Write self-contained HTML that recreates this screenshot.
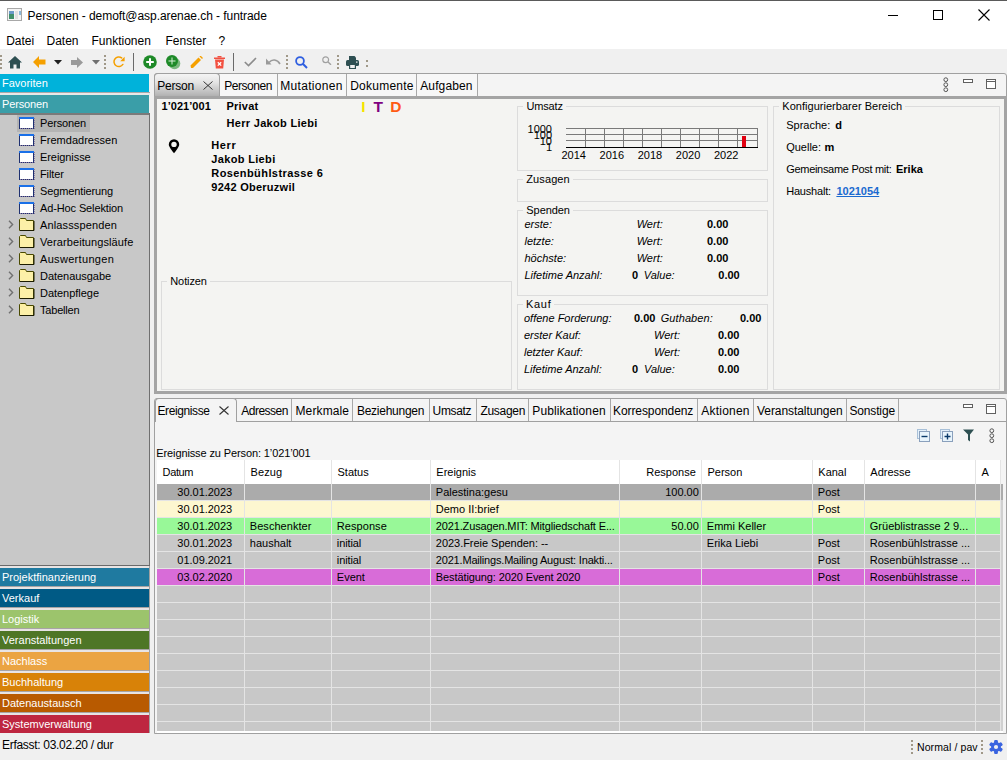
<!DOCTYPE html><html><head><meta charset="utf-8"><style>
html,body{margin:0;padding:0;}
body{width:1007px;height:760px;position:relative;overflow:hidden;background:#f0f0f0;font-family:"Liberation Sans",sans-serif;color:#000;}
.t{position:absolute;white-space:pre;line-height:1;}
.r{position:absolute;box-sizing:border-box;}
</style></head><body>
<div class="r" style="left:0px;top:0px;width:1007px;height:30px;background:#fff;"></div>
<div class="r" style="left:0px;top:0px;width:1007px;height:1px;background:#5a5a5a;"></div>
<svg class="r" style="left:7px;top:8px" width="16" height="14" viewBox="0 0 16 14"><rect x="0.5" y="0.5" width="14" height="12" fill="#f4f4f4" stroke="#a8a8a8"/><rect x="2" y="3" width="5" height="8" fill="#3f8f6a"/><rect x="2" y="3" width="5" height="3" fill="#6a9ac8"/><rect x="8" y="3" width="3" height="8" fill="#e0e0e0"/><rect x="12" y="3" width="2" height="4" fill="#8ab8d8"/></svg>
<div class="t " style="left:27.6px;top:10.34px;font-size:12px;color:#000;letter-spacing:-0.057px;">Personen - demoft@asp.arenae.ch - funtrade</div>
<div class="r" style="left:888px;top:15px;width:10px;height:1px;background:#000;"></div>
<div class="r" style="left:933px;top:10px;width:10px;height:10px;border:1px solid #000;"></div>
<svg class="r" style="left:978px;top:9px" width="12" height="12" viewBox="0 0 12 12"><path d="M0.5 0.5L11.5 11.5M11.5 0.5L0.5 11.5" stroke="#000" stroke-width="1.1"/></svg>
<div class="r" style="left:0px;top:30px;width:1007px;height:19px;background:#fff;"></div>
<div class="t " style="left:6.2px;top:35.04px;font-size:12px;">Datei</div>
<div class="t " style="left:46.5px;top:35.04px;font-size:12px;">Daten</div>
<div class="t " style="left:91.5px;top:35.04px;font-size:12px;">Funktionen</div>
<div class="t " style="left:165.5px;top:35.04px;font-size:12px;">Fenster</div>
<div class="t " style="left:218.5px;top:35.04px;font-size:12px;">?</div>
<div class="r" style="left:0px;top:55px;width:2px;height:2px;background:#a09888;"></div>
<div class="r" style="left:0px;top:59px;width:2px;height:2px;background:#a09888;"></div>
<div class="r" style="left:0px;top:63px;width:2px;height:2px;background:#a09888;"></div>
<div class="r" style="left:0px;top:67px;width:2px;height:2px;background:#a09888;"></div>
<svg class="r" style="left:8px;top:56px" width="14" height="13" viewBox="0 0 14 13"><path d="M7 0L0 6.5H2V12.5H5.5V8.5H8.5V12.5H12V6.5H14Z" fill="#2e4f52"/></svg>
<svg class="r" style="left:33px;top:56px" width="13" height="12" viewBox="0 0 13 12"><path d="M0 6L6 0V3.5H12.5V8.5H6V12Z" fill="#f5a000"/></svg>
<svg class="r" style="left:54px;top:60px" width="8" height="5" viewBox="0 0 8 5"><path d="M0 0H8L4 4.5Z" fill="#202020"/></svg>
<svg class="r" style="left:71px;top:57px" width="12" height="11" viewBox="0 0 12 11"><path d="M12 5.5L6 0V3H0V8H6V11Z" fill="#9a9a9a"/></svg>
<svg class="r" style="left:92px;top:60px" width="8" height="5" viewBox="0 0 8 5"><path d="M0 0H8L4 4.5Z" fill="#707070"/></svg>
<div class="r" style="left:104px;top:55px;width:2px;height:2px;background:#a09888;"></div>
<div class="r" style="left:104px;top:59px;width:2px;height:2px;background:#a09888;"></div>
<div class="r" style="left:104px;top:63px;width:2px;height:2px;background:#a09888;"></div>
<div class="r" style="left:104px;top:67px;width:2px;height:2px;background:#a09888;"></div>
<svg class="r" style="left:113px;top:56px" width="13" height="12" viewBox="0 0 13 12"><path d="M8.65 1.9A4.8 4.8 0 1 0 9.83 8.45" fill="none" stroke="#f5a000" stroke-width="1.5" stroke-linecap="round"/><path d="M11.6 0.8V5.2H7.2Z" fill="#f5a000"/></svg>
<div class="r" style="left:133px;top:53px;width:1px;height:18px;background:#6a6a6a;"></div>
<svg class="r" style="left:143px;top:55px" width="14" height="14" viewBox="0 0 14 14"><circle cx="7" cy="7" r="6.8" fill="#1e8a28"/><path d="M7 3.2V10.8M3.2 7H10.8" stroke="#fff" stroke-width="2"/></svg>
<svg class="r" style="left:166px;top:55px" width="15" height="15" viewBox="0 0 15 15"><circle cx="8.5" cy="8.5" r="5.8" fill="#7ab87e"/><circle cx="6" cy="6" r="6" fill="#1e8a28"/><path d="M6 2.5V9.5M2.5 6H9.5" stroke="#d8f0d8" stroke-width="1"/></svg>
<svg class="r" style="left:190px;top:56px" width="13" height="13" viewBox="0 0 13 13"><path d="M1 12L0.5 9.5L8.5 1.5L11 4L3 12Z" fill="#f5a000"/><path d="M9.5 0.5L10.5 -0.5L13 2L12 3Z" fill="#f5a000"/></svg>
<svg class="r" style="left:214px;top:56px" width="11" height="13" viewBox="0 0 11 13"><path d="M0 1.5H11V3H0Z" fill="#f25040"/><path d="M3.5 0H7.5V1.5H3.5Z" fill="#f25040"/><path d="M1 3.5H10L9.2 12.5H1.8Z" fill="#f25040"/><path d="M3.8 6.2L7.2 9.6M7.2 6.2L3.8 9.6" stroke="#fff" stroke-width="1.3"/></svg>
<div class="r" style="left:233px;top:53px;width:1px;height:18px;background:#6a6a6a;"></div>
<svg class="r" style="left:244px;top:57px" width="13" height="10" viewBox="0 0 13 10"><path d="M0.8 5L4.5 8.6L12 1" fill="none" stroke="#8c8c8c" stroke-width="1.6"/></svg>
<svg class="r" style="left:266px;top:58px" width="15" height="8" viewBox="0 0 15 8"><path d="M3 4.5C6 1 11 1 14 6" fill="none" stroke="#9a9a9a" stroke-width="1.6"/><path d="M0 0.5V6.5H5.5Z" fill="#9a9a9a"/></svg>
<div class="r" style="left:286px;top:55px;width:2px;height:2px;background:#a09888;"></div>
<div class="r" style="left:286px;top:59px;width:2px;height:2px;background:#a09888;"></div>
<div class="r" style="left:286px;top:63px;width:2px;height:2px;background:#a09888;"></div>
<div class="r" style="left:286px;top:67px;width:2px;height:2px;background:#a09888;"></div>
<svg class="r" style="left:295px;top:56px" width="13" height="13" viewBox="0 0 13 13"><circle cx="5" cy="5" r="3.9" fill="none" stroke="#2f5fe0" stroke-width="1.8"/><path d="M7.8 7.8L12 12" stroke="#2f5fe0" stroke-width="2"/></svg>
<svg class="r" style="left:322px;top:56px" width="10" height="9" viewBox="0 0 10 9"><circle cx="3.7" cy="3.7" r="2.9" fill="none" stroke="#a0a0a0" stroke-width="1.2"/><path d="M5.8 5.8L9 8.8" stroke="#a0a0a0" stroke-width="1.4"/></svg>
<div class="r" style="left:337px;top:55px;width:2px;height:2px;background:#a09888;"></div>
<div class="r" style="left:337px;top:59px;width:2px;height:2px;background:#a09888;"></div>
<div class="r" style="left:337px;top:63px;width:2px;height:2px;background:#a09888;"></div>
<div class="r" style="left:337px;top:67px;width:2px;height:2px;background:#a09888;"></div>
<svg class="r" style="left:346px;top:56px" width="13" height="13" viewBox="0 0 13 13"><path d="M3 0H8.5L10 1.5V4H3Z" fill="#2e4f52"/><rect x="0" y="4" width="13" height="6" rx="1.5" fill="#2e4f52"/><rect x="3" y="8" width="7" height="5" fill="#2e4f52"/><rect x="4.2" y="9" width="4.6" height="3" fill="#f0f0f0"/><rect x="10" y="5.5" width="1.5" height="1.2" fill="#f0f0f0"/></svg>
<div class="r" style="left:366px;top:60px;width:2px;height:2px;background:#a09888;"></div>
<div class="r" style="left:366px;top:65px;width:2px;height:2px;background:#a09888;"></div>
<div class="r" style="left:0px;top:74px;width:149px;height:18px;background:#00b2da;"></div>
<div class="r" style="left:0px;top:92px;width:150px;height:1px;background:#a8a8a8;"></div>
<div class="r" style="left:0px;top:93px;width:150px;height:2px;background:#e8e8e8;"></div>
<div class="t " style="left:2px;top:77.99px;font-size:11px;color:#fff;">Favoriten</div>
<div class="r" style="left:0px;top:95px;width:149px;height:18px;background:#3a9ea8;"></div>
<div class="t " style="left:2px;top:99.09px;font-size:11px;color:#fff;letter-spacing:-0.142px;">Personen</div>
<div class="r" style="left:0px;top:113px;width:150px;height:2px;background:#7a7a7a;"></div>
<div class="r" style="left:0px;top:115px;width:149px;height:450px;background:#c8c8c8;"></div>
<div class="r" style="left:149px;top:113px;width:1px;height:453px;background:#707070;"></div>
<div class="r" style="left:0px;top:565px;width:150px;height:1px;background:#6a6a6a;"></div>
<div class="r" style="left:17px;top:115px;width:73px;height:17px;background:#b4b4b4;"></div>
<svg class="r" style="left:19px;top:117px" width="16" height="12" viewBox="0 0 16 12"><rect x="0.5" y="0.5" width="14" height="11" fill="#fff" stroke="#1e3070"/><path d="M15.5 1V12M1 11.5H15" stroke="#8a7aa0" stroke-width="1" stroke-dasharray="1 1"/><rect x="0" y="0" width="15" height="2" fill="#1a70e8"/></svg>
<div class="t " style="left:40px;top:117.69px;font-size:11px;color:#000;letter-spacing:-0.142px;">Personen</div>
<svg class="r" style="left:19px;top:134px" width="16" height="12" viewBox="0 0 16 12"><rect x="0.5" y="0.5" width="14" height="11" fill="#fff" stroke="#1e3070"/><path d="M15.5 1V12M1 11.5H15" stroke="#8a7aa0" stroke-width="1" stroke-dasharray="1 1"/><rect x="0" y="0" width="15" height="2" fill="#1a70e8"/></svg>
<div class="t " style="left:40px;top:134.69px;font-size:11px;color:#000;letter-spacing:0.021px;">Fremdadressen</div>
<svg class="r" style="left:19px;top:151px" width="16" height="12" viewBox="0 0 16 12"><rect x="0.5" y="0.5" width="14" height="11" fill="#fff" stroke="#1e3070"/><path d="M15.5 1V12M1 11.5H15" stroke="#8a7aa0" stroke-width="1" stroke-dasharray="1 1"/><rect x="0" y="0" width="15" height="2" fill="#1a70e8"/></svg>
<div class="t " style="left:40px;top:151.69px;font-size:11px;color:#000;letter-spacing:-0.073px;">Ereignisse</div>
<svg class="r" style="left:19px;top:168px" width="16" height="12" viewBox="0 0 16 12"><rect x="0.5" y="0.5" width="14" height="11" fill="#fff" stroke="#1e3070"/><path d="M15.5 1V12M1 11.5H15" stroke="#8a7aa0" stroke-width="1" stroke-dasharray="1 1"/><rect x="0" y="0" width="15" height="2" fill="#1a70e8"/></svg>
<div class="t " style="left:40px;top:168.69px;font-size:11px;color:#000;letter-spacing:-0.111px;">Filter</div>
<svg class="r" style="left:19px;top:185px" width="16" height="12" viewBox="0 0 16 12"><rect x="0.5" y="0.5" width="14" height="11" fill="#fff" stroke="#1e3070"/><path d="M15.5 1V12M1 11.5H15" stroke="#8a7aa0" stroke-width="1" stroke-dasharray="1 1"/><rect x="0" y="0" width="15" height="2" fill="#1a70e8"/></svg>
<div class="t " style="left:40px;top:185.69px;font-size:11px;color:#000;letter-spacing:-0.126px;">Segmentierung</div>
<svg class="r" style="left:19px;top:202px" width="16" height="12" viewBox="0 0 16 12"><rect x="0.5" y="0.5" width="14" height="11" fill="#fff" stroke="#1e3070"/><path d="M15.5 1V12M1 11.5H15" stroke="#8a7aa0" stroke-width="1" stroke-dasharray="1 1"/><rect x="0" y="0" width="15" height="2" fill="#1a70e8"/></svg>
<div class="t " style="left:40px;top:202.69px;font-size:11px;color:#000;letter-spacing:-0.120px;">Ad-Hoc Selektion</div>
<svg class="r" style="left:8px;top:220px" width="6" height="9" viewBox="0 0 6 9"><path d="M1 0.8L4.6 4.5L1 8.2" fill="none" stroke="#707070" stroke-width="1.4"/></svg>
<svg class="r" style="left:19px;top:218px" width="16" height="13" viewBox="0 0 16 13"><path d="M0.5 12.5V1.5L1.5 0.5H6.5L7.5 2.5H14.5V12.5Z" fill="#fdf0a0" stroke="#4a4a00"/><path d="M1 12.5H15V3" fill="none" stroke="#1c1c00" stroke-width="1"/><rect x="1" y="3" width="13" height="9" fill="#fcf0a8"/></svg>
<div class="t " style="left:40px;top:219.69px;font-size:11px;color:#000;letter-spacing:0.139px;">Anlassspenden</div>
<svg class="r" style="left:8px;top:237px" width="6" height="9" viewBox="0 0 6 9"><path d="M1 0.8L4.6 4.5L1 8.2" fill="none" stroke="#707070" stroke-width="1.4"/></svg>
<svg class="r" style="left:19px;top:235px" width="16" height="13" viewBox="0 0 16 13"><path d="M0.5 12.5V1.5L1.5 0.5H6.5L7.5 2.5H14.5V12.5Z" fill="#fdf0a0" stroke="#4a4a00"/><path d="M1 12.5H15V3" fill="none" stroke="#1c1c00" stroke-width="1"/><rect x="1" y="3" width="13" height="9" fill="#fcf0a8"/></svg>
<div class="t " style="left:40px;top:236.69px;font-size:11px;color:#000;letter-spacing:0.092px;">Verarbeitungsläufe</div>
<svg class="r" style="left:8px;top:254px" width="6" height="9" viewBox="0 0 6 9"><path d="M1 0.8L4.6 4.5L1 8.2" fill="none" stroke="#707070" stroke-width="1.4"/></svg>
<svg class="r" style="left:19px;top:252px" width="16" height="13" viewBox="0 0 16 13"><path d="M0.5 12.5V1.5L1.5 0.5H6.5L7.5 2.5H14.5V12.5Z" fill="#fdf0a0" stroke="#4a4a00"/><path d="M1 12.5H15V3" fill="none" stroke="#1c1c00" stroke-width="1"/><rect x="1" y="3" width="13" height="9" fill="#fcf0a8"/></svg>
<div class="t " style="left:40px;top:253.69px;font-size:11px;color:#000;letter-spacing:0.316px;">Auswertungen</div>
<svg class="r" style="left:8px;top:271px" width="6" height="9" viewBox="0 0 6 9"><path d="M1 0.8L4.6 4.5L1 8.2" fill="none" stroke="#707070" stroke-width="1.4"/></svg>
<svg class="r" style="left:19px;top:269px" width="16" height="13" viewBox="0 0 16 13"><path d="M0.5 12.5V1.5L1.5 0.5H6.5L7.5 2.5H14.5V12.5Z" fill="#fdf0a0" stroke="#4a4a00"/><path d="M1 12.5H15V3" fill="none" stroke="#1c1c00" stroke-width="1"/><rect x="1" y="3" width="13" height="9" fill="#fcf0a8"/></svg>
<div class="t " style="left:40px;top:270.69px;font-size:11px;color:#000;letter-spacing:-0.042px;">Datenausgabe</div>
<svg class="r" style="left:8px;top:288px" width="6" height="9" viewBox="0 0 6 9"><path d="M1 0.8L4.6 4.5L1 8.2" fill="none" stroke="#707070" stroke-width="1.4"/></svg>
<svg class="r" style="left:19px;top:286px" width="16" height="13" viewBox="0 0 16 13"><path d="M0.5 12.5V1.5L1.5 0.5H6.5L7.5 2.5H14.5V12.5Z" fill="#fdf0a0" stroke="#4a4a00"/><path d="M1 12.5H15V3" fill="none" stroke="#1c1c00" stroke-width="1"/><rect x="1" y="3" width="13" height="9" fill="#fcf0a8"/></svg>
<div class="t " style="left:40px;top:287.69px;font-size:11px;color:#000;letter-spacing:-0.033px;">Datenpflege</div>
<svg class="r" style="left:8px;top:305px" width="6" height="9" viewBox="0 0 6 9"><path d="M1 0.8L4.6 4.5L1 8.2" fill="none" stroke="#707070" stroke-width="1.4"/></svg>
<svg class="r" style="left:19px;top:303px" width="16" height="13" viewBox="0 0 16 13"><path d="M0.5 12.5V1.5L1.5 0.5H6.5L7.5 2.5H14.5V12.5Z" fill="#fdf0a0" stroke="#4a4a00"/><path d="M1 12.5H15V3" fill="none" stroke="#1c1c00" stroke-width="1"/><rect x="1" y="3" width="13" height="9" fill="#fcf0a8"/></svg>
<div class="t " style="left:40px;top:304.69px;font-size:11px;color:#000;letter-spacing:-0.198px;">Tabellen</div>
<div class="r" style="left:0px;top:566px;width:150px;height:169px;background:#e8e4e4;"></div>
<div class="r" style="left:0px;top:568px;width:150px;height:18px;background:#1f7aa0;"></div>
<div class="r" style="left:0px;top:586px;width:150px;height:1px;background:#a8a4a4;"></div>
<div class="t " style="left:2px;top:571.99px;font-size:11px;color:#fff;">Projektfinanzierung</div>
<div class="r" style="left:0px;top:589px;width:150px;height:18px;background:#005a85;"></div>
<div class="r" style="left:0px;top:607px;width:150px;height:1px;background:#a8a4a4;"></div>
<div class="t " style="left:2px;top:592.99px;font-size:11px;color:#fff;">Verkauf</div>
<div class="r" style="left:0px;top:610px;width:150px;height:18px;background:#9cc46c;"></div>
<div class="r" style="left:0px;top:628px;width:150px;height:1px;background:#a8a4a4;"></div>
<div class="t " style="left:2px;top:613.99px;font-size:11px;color:#fff;">Logistik</div>
<div class="r" style="left:0px;top:631px;width:150px;height:18px;background:#4e7626;"></div>
<div class="r" style="left:0px;top:649px;width:150px;height:1px;background:#a8a4a4;"></div>
<div class="t " style="left:2px;top:634.99px;font-size:11px;color:#fff;">Veranstaltungen</div>
<div class="r" style="left:0px;top:652px;width:150px;height:18px;background:#eba442;"></div>
<div class="r" style="left:0px;top:670px;width:150px;height:1px;background:#a8a4a4;"></div>
<div class="t " style="left:2px;top:655.99px;font-size:11px;color:#fff;">Nachlass</div>
<div class="r" style="left:0px;top:673px;width:150px;height:18px;background:#d88208;"></div>
<div class="r" style="left:0px;top:691px;width:150px;height:1px;background:#a8a4a4;"></div>
<div class="t " style="left:2px;top:676.99px;font-size:11px;color:#fff;">Buchhaltung</div>
<div class="r" style="left:0px;top:694px;width:150px;height:18px;background:#b85a00;"></div>
<div class="r" style="left:0px;top:712px;width:150px;height:1px;background:#a8a4a4;"></div>
<div class="t " style="left:2px;top:697.99px;font-size:11px;color:#fff;">Datenaustausch</div>
<div class="r" style="left:0px;top:715px;width:150px;height:18px;background:#be2640;"></div>
<div class="r" style="left:0px;top:733px;width:150px;height:1px;background:#a8a4a4;"></div>
<div class="t " style="left:2px;top:718.99px;font-size:11px;color:#fff;">Systemverwaltung</div>
<div class="r" style="left:149px;top:566px;width:1px;height:167px;background:#a0a0a0;"></div>
<div class="r" style="left:0px;top:733px;width:150px;height:2px;background:#f0f0f0;"></div>
<div class="t " style="left:2px;top:738.74px;font-size:12px;letter-spacing:-0.299px;">Erfasst: 03.02.20 / dur</div>
<div class="r" style="left:911px;top:740px;width:2px;height:2px;background:#a09888;"></div>
<div class="r" style="left:911px;top:744px;width:2px;height:2px;background:#a09888;"></div>
<div class="r" style="left:911px;top:748px;width:2px;height:2px;background:#a09888;"></div>
<div class="r" style="left:911px;top:752px;width:2px;height:2px;background:#a09888;"></div>
<div class="t " style="left:917px;top:741.61px;font-size:10.5px;letter-spacing:0.097px;">Normal / pav</div>
<div class="r" style="left:981px;top:740px;width:2px;height:2px;background:#a09888;"></div>
<div class="r" style="left:981px;top:744px;width:2px;height:2px;background:#a09888;"></div>
<div class="r" style="left:981px;top:748px;width:2px;height:2px;background:#a09888;"></div>
<div class="r" style="left:981px;top:752px;width:2px;height:2px;background:#a09888;"></div>
<svg class="r" style="left:989px;top:740px" width="14" height="14" viewBox="0 0 14 14"><g transform="translate(7 7)" fill="#3a64e0"><circle r="4.9"/><rect x="-1.9" y="-7" width="3.8" height="4" rx="1.2" transform="rotate(0)"/><rect x="-1.9" y="-7" width="3.8" height="4" rx="1.2" transform="rotate(60)"/><rect x="-1.9" y="-7" width="3.8" height="4" rx="1.2" transform="rotate(120)"/><rect x="-1.9" y="-7" width="3.8" height="4" rx="1.2" transform="rotate(180)"/><rect x="-1.9" y="-7" width="3.8" height="4" rx="1.2" transform="rotate(240)"/><rect x="-1.9" y="-7" width="3.8" height="4" rx="1.2" transform="rotate(300)"/></g><circle cx="7" cy="7" r="2.1" fill="#f0f0f0"/></svg>
<div class="r" style="left:154px;top:73px;width:853px;height:321px;background:#f4f4f4;border:1px solid #a0a0a0;border-radius:3px 3px 0 0;"></div>
<div class="r" style="left:219px;top:73px;width:259px;height:24px;background:#f7f7f7;border-top:1px solid #a0a0a0;"></div>
<div class="r" style="left:154px;top:73px;width:66px;height:25px;background:linear-gradient(#f4f4f4 0%,#e4e4e4 35%,#aaaaaa 100%);border:1px solid #a0a0a0;border-bottom:none;border-radius:4px 4px 0 0;"></div>
<div class="t " style="left:157.3px;top:80.34px;font-size:12px;color:#000;letter-spacing:-0.246px;">Person</div>
<div class="r" style="left:277px;top:74px;width:1px;height:22px;background:#a8a8a8;"></div>
<div class="t " style="left:224.2px;top:80.34px;font-size:12px;color:#000;letter-spacing:-0.439px;">Personen</div>
<div class="r" style="left:346px;top:74px;width:1px;height:22px;background:#a8a8a8;"></div>
<div class="t " style="left:280.2px;top:80.34px;font-size:12px;color:#000;letter-spacing:0.325px;">Mutationen</div>
<div class="r" style="left:416px;top:74px;width:1px;height:22px;background:#a8a8a8;"></div>
<div class="t " style="left:350.2px;top:80.34px;font-size:12px;color:#000;letter-spacing:0.241px;">Dokumente</div>
<div class="r" style="left:477px;top:74px;width:1px;height:22px;background:#a8a8a8;"></div>
<div class="t " style="left:420.2px;top:80.34px;font-size:12px;color:#000;letter-spacing:0.130px;">Aufgaben</div>
<svg class="r" style="left:203px;top:81px" width="10" height="9" viewBox="0 0 10 9"><path d="M0.5 0.5L9.5 8.5M9.5 0.5L0.5 8.5" stroke="#222" stroke-width="0.9"/></svg>
<svg class="r" style="left:943px;top:77px" width="6" height="16" viewBox="0 0 6 16"><circle cx="2.8" cy="2.7" r="1.9" fill="none" stroke="#555" stroke-width="1"/><circle cx="2.8" cy="7.7" r="1.9" fill="none" stroke="#555" stroke-width="1"/><circle cx="2.8" cy="12.7" r="1.9" fill="none" stroke="#555" stroke-width="1"/></svg>
<div class="r" style="left:963px;top:79px;width:10px;height:4px;border:1px solid #606060;background:#fff;"></div>
<div class="r" style="left:986px;top:79px;width:10px;height:10px;border:1px solid #606060;background:#fff;"></div>
<div class="r" style="left:987px;top:81px;width:8px;height:1px;background:#606060;"></div>
<div class="r" style="left:154px;top:96px;width:853px;height:298px;border:3px solid #a4a4a4;background:#f4f4f2;"></div>
<div class="t " style="left:161.5px;top:101.19px;font-size:11px;font-weight:bold;letter-spacing:0.045px;">1’021’001</div>
<div class="t " style="left:226.5px;top:101.19px;font-size:11px;font-weight:bold;letter-spacing:0.224px;">Privat</div>
<div class="t " style="left:226.5px;top:117.69px;font-size:11px;font-weight:bold;letter-spacing:0.306px;">Herr Jakob Liebi</div>
<div class="t " style="left:361.2px;top:98.78px;font-size:15.5px;font-weight:bold;color:#f5e400;">I</div>
<div class="t " style="left:373.6px;top:98.78px;font-size:15.5px;font-weight:bold;color:#800080;">T</div>
<div class="t " style="left:390.2px;top:98.78px;font-size:15.5px;font-weight:bold;color:#ff5a14;">D</div>
<svg class="r" style="left:168px;top:139px" width="12" height="15" viewBox="0 0 12 15"><path d="M6 14.3C2.4 9.6 0.8 7.2 0.8 5.4A5.2 5.2 0 0 1 11.2 5.4C11.2 7.2 9.6 9.6 6 14.3Z" fill="#000"/><circle cx="6" cy="5.4" r="2.7" fill="#f4f4f2"/></svg>
<div class="t " style="left:211.3px;top:139.99px;font-size:11px;font-weight:bold;letter-spacing:0.625px;">Herr</div>
<div class="t " style="left:211.3px;top:153.84px;font-size:11px;font-weight:bold;letter-spacing:0.337px;">Jakob Liebi</div>
<div class="t " style="left:211.3px;top:167.69px;font-size:11px;font-weight:bold;letter-spacing:0.415px;">Rosenbühlstrasse 6</div>
<div class="t " style="left:211.3px;top:181.54px;font-size:11px;font-weight:bold;letter-spacing:0.262px;">9242 Oberuzwil</div>
<div class="r" style="left:161px;top:281px;width:351px;height:109px;border:1px solid #dcdcdc;"></div>
<div class="t " style="left:170.3px;top:276.19px;font-size:11px;background:#f4f4f2;padding:0 3px;margin-left:-3px;letter-spacing:-0.116px;">Notizen</div>
<div class="r" style="left:517px;top:106px;width:251px;height:65px;border:1px solid #dcdcdc;"></div>
<div class="t " style="left:526.4px;top:101.19px;font-size:11px;background:#f4f4f2;padding:0 3px;margin-left:-3px;letter-spacing:-0.136px;">Umsatz</div>
<svg class="r" style="left:0;top:0" width="1007" height="760"><g stroke="#7a7a7a" stroke-width="1"><path d="M566 128.5H757.5"/><path d="M566 134.5H757.5"/><path d="M566 140.5H757.5"/><path d="M585.5 128V147"/><path d="M604.5 128V147"/><path d="M623.5 128V147"/><path d="M642.5 128V147"/><path d="M661.5 128V147"/><path d="M680.5 128V147"/><path d="M699.5 128V147"/><path d="M718.5 128V147"/><path d="M737.5 128V147"/><path d="M757.5 128V147"/></g><path d="M566 147.5H758" stroke="#000" stroke-width="1"/><rect x="742" y="136" width="4" height="11" fill="#e00010"/></svg>
<div class="t" style="right:455px;top:124.19px;font-size:11px;">1000</div>
<div class="t" style="right:455px;top:130.19px;font-size:11px;">100</div>
<div class="t" style="right:455px;top:136.19px;font-size:11px;">10</div>
<div class="t" style="right:455px;top:142.19px;font-size:11px;">1</div>
<div class="t " style="left:561.5px;top:149.69px;font-size:11px;">2014</div>
<div class="t " style="left:599.6px;top:149.69px;font-size:11px;">2016</div>
<div class="t " style="left:637.7px;top:149.69px;font-size:11px;">2018</div>
<div class="t " style="left:675.8px;top:149.69px;font-size:11px;">2020</div>
<div class="t " style="left:713.9px;top:149.69px;font-size:11px;">2022</div>
<div class="r" style="left:517px;top:179px;width:251px;height:23px;border:1px solid #dcdcdc;"></div>
<div class="t " style="left:526.3px;top:174.19px;font-size:11px;background:#f4f4f2;padding:0 3px;margin-left:-3px;letter-spacing:0.098px;">Zusagen</div>
<div class="r" style="left:517px;top:210px;width:251px;height:86px;border:1px solid #dcdcdc;"></div>
<div class="t " style="left:526.3px;top:205.19px;font-size:11px;background:#f4f4f2;padding:0 3px;margin-left:-3px;letter-spacing:-0.058px;">Spenden</div>
<div class="t " style="left:524.5px;top:218.99px;font-size:11px;font-style:italic;">erste:</div>
<div class="t " style="left:636.7px;top:218.99px;font-size:11px;font-style:italic;">Wert:</div>
<div class="t " style="left:707px;top:218.99px;font-size:11px;font-weight:bold;">0.00</div>
<div class="t " style="left:524.5px;top:235.89px;font-size:11px;font-style:italic;">letzte:</div>
<div class="t " style="left:636.7px;top:235.89px;font-size:11px;font-style:italic;">Wert:</div>
<div class="t " style="left:707px;top:235.89px;font-size:11px;font-weight:bold;">0.00</div>
<div class="t " style="left:524.5px;top:252.79px;font-size:11px;font-style:italic;">höchste:</div>
<div class="t " style="left:636.7px;top:252.79px;font-size:11px;font-style:italic;">Wert:</div>
<div class="t " style="left:707px;top:252.79px;font-size:11px;font-weight:bold;">0.00</div>
<div class="t " style="left:524.5px;top:269.69px;font-size:11px;font-style:italic;">Lifetime Anzahl:</div>
<div class="t " style="left:632px;top:269.69px;font-size:11px;font-weight:bold;">0</div>
<div class="t " style="left:643.8px;top:269.69px;font-size:11px;font-style:italic;">Value:</div>
<div class="t " style="left:718.3px;top:269.69px;font-size:11px;font-weight:bold;">0.00</div>
<div class="r" style="left:517px;top:304px;width:251px;height:86px;border:1px solid #dcdcdc;"></div>
<div class="t " style="left:526px;top:299.19px;font-size:11px;background:#f4f4f2;padding:0 3px;margin-left:-3px;letter-spacing:0.686px;">Kauf</div>
<div class="t " style="left:524px;top:312.89px;font-size:11px;font-style:italic;">offene Forderung:</div>
<div class="t " style="left:634px;top:312.89px;font-size:11px;font-weight:bold;">0.00</div>
<div class="t " style="left:660.7px;top:312.89px;font-size:11px;font-style:italic;letter-spacing:0.091px;">Guthaben:</div>
<div class="t " style="left:740px;top:312.89px;font-size:11px;font-weight:bold;">0.00</div>
<div class="t " style="left:524px;top:329.79px;font-size:11px;font-style:italic;">erster Kauf:</div>
<div class="t " style="left:654px;top:329.79px;font-size:11px;font-style:italic;">Wert:</div>
<div class="t " style="left:718px;top:329.79px;font-size:11px;font-weight:bold;">0.00</div>
<div class="t " style="left:524px;top:346.59px;font-size:11px;font-style:italic;">letzter Kauf:</div>
<div class="t " style="left:654px;top:346.59px;font-size:11px;font-style:italic;">Wert:</div>
<div class="t " style="left:718px;top:346.59px;font-size:11px;font-weight:bold;">0.00</div>
<div class="t " style="left:524px;top:363.79px;font-size:11px;font-style:italic;">Lifetime Anzahl:</div>
<div class="t " style="left:632px;top:363.79px;font-size:11px;font-weight:bold;">0</div>
<div class="t " style="left:644px;top:363.79px;font-size:11px;font-style:italic;">Value:</div>
<div class="t " style="left:718px;top:363.79px;font-size:11px;font-weight:bold;">0.00</div>
<div class="r" style="left:773px;top:106px;width:227px;height:284px;border:1px solid #dcdcdc;"></div>
<div class="t " style="left:782.3px;top:101.19px;font-size:11px;background:#f4f4f2;padding:0 3px;margin-left:-3px;letter-spacing:0.025px;">Konfigurierbarer Bereich</div>
<div class="t " style="left:786.2px;top:119.79px;font-size:11px;">Sprache:</div>
<div class="t " style="left:835.2px;top:119.79px;font-size:11px;font-weight:bold;">d</div>
<div class="t " style="left:786.2px;top:142.19px;font-size:11px;">Quelle:</div>
<div class="t " style="left:824.4px;top:142.19px;font-size:11px;font-weight:bold;">m</div>
<div class="t " style="left:786.2px;top:164.29px;font-size:11px;letter-spacing:-0.298px;">Gemeinsame Post mit:</div>
<div class="t " style="left:896px;top:164.29px;font-size:11px;font-weight:bold;">Erika</div>
<div class="t " style="left:786.2px;top:185.99px;font-size:11px;letter-spacing:-0.198px;">Haushalt:</div>
<div class="t " style="left:836.4px;top:185.99px;font-size:11px;font-weight:bold;color:#1a6ad0;text-decoration:underline;">1021054</div>
<div class="r" style="left:154px;top:398px;width:853px;height:336px;background:#f4f4f4;border:1px solid #a0a0a0;border-radius:3px 3px 0 0;"></div>
<div class="r" style="left:154px;top:421px;width:853px;height:1px;background:#a0a0a0;"></div>
<div class="r" style="left:155px;top:398px;width:82px;height:24px;background:#f4f4f4;border:1px solid #a0a0a0;border-bottom:none;border-radius:4px 4px 0 0;"></div>
<div class="t " style="left:157.5px;top:404.74px;font-size:12px;letter-spacing:-0.403px;">Ereignisse</div>
<div class="r" style="left:291px;top:399px;width:1px;height:22px;background:#a8a8a8;"></div>
<div class="t " style="left:241.2px;top:404.74px;font-size:12px;letter-spacing:-0.486px;">Adressen</div>
<div class="r" style="left:352px;top:399px;width:1px;height:22px;background:#a8a8a8;"></div>
<div class="t " style="left:295.5px;top:404.74px;font-size:12px;letter-spacing:0.116px;">Merkmale</div>
<div class="r" style="left:429px;top:399px;width:1px;height:22px;background:#a8a8a8;"></div>
<div class="t " style="left:356.9px;top:404.74px;font-size:12px;letter-spacing:-0.256px;">Beziehungen</div>
<div class="r" style="left:476px;top:399px;width:1px;height:22px;background:#a8a8a8;"></div>
<div class="t " style="left:432.6px;top:404.74px;font-size:12px;letter-spacing:-0.334px;">Umsatz</div>
<div class="r" style="left:528px;top:399px;width:1px;height:22px;background:#a8a8a8;"></div>
<div class="t " style="left:480.4px;top:404.74px;font-size:12px;letter-spacing:-0.284px;">Zusagen</div>
<div class="r" style="left:610px;top:399px;width:1px;height:22px;background:#a8a8a8;"></div>
<div class="t " style="left:532.3px;top:404.74px;font-size:12px;letter-spacing:0.103px;">Publikationen</div>
<div class="r" style="left:697px;top:399px;width:1px;height:22px;background:#a8a8a8;"></div>
<div class="t " style="left:613px;top:404.74px;font-size:12px;letter-spacing:-0.091px;">Korrespondenz</div>
<div class="r" style="left:753px;top:399px;width:1px;height:22px;background:#a8a8a8;"></div>
<div class="t " style="left:701.3px;top:404.74px;font-size:12px;letter-spacing:0.214px;">Aktionen</div>
<div class="r" style="left:846px;top:399px;width:1px;height:22px;background:#a8a8a8;"></div>
<div class="t " style="left:757.1px;top:404.74px;font-size:12px;letter-spacing:-0.082px;">Veranstaltungen</div>
<div class="r" style="left:898px;top:399px;width:1px;height:22px;background:#a8a8a8;"></div>
<div class="t " style="left:849.4px;top:404.74px;font-size:12px;letter-spacing:-0.143px;">Sonstige</div>
<svg class="r" style="left:219px;top:406px" width="10" height="9" viewBox="0 0 10 9"><path d="M0.5 0.5L9.5 8.5M9.5 0.5L0.5 8.5" stroke="#333" stroke-width="1.1"/></svg>
<div class="r" style="left:963px;top:404px;width:10px;height:4px;border:1px solid #606060;background:#fff;"></div>
<div class="r" style="left:986px;top:404px;width:10px;height:10px;border:1px solid #606060;background:#fff;"></div>
<div class="r" style="left:987px;top:406px;width:8px;height:1px;background:#606060;"></div>
<svg class="r" style="left:917px;top:429px" width="13" height="13" viewBox="0 0 13 13"><rect x="0.5" y="0.5" width="9" height="9" fill="#e4f0fa" stroke="#a8c0d8"/><rect x="2.5" y="2.5" width="10" height="10" fill="#e8f4fc" stroke="#8aa0bc"/><path d="M4.5 7.5H10.5" stroke="#0a3a6a" stroke-width="1.4"/></svg>
<svg class="r" style="left:940px;top:429px" width="13" height="13" viewBox="0 0 13 13"><rect x="0.5" y="0.5" width="9" height="9" fill="#e4f0fa" stroke="#a8c0d8"/><rect x="2.5" y="2.5" width="10" height="10" fill="#e8f4fc" stroke="#8aa0bc"/><path d="M4.5 7.5H10.5M7.5 4.5V10.5" stroke="#0a3a6a" stroke-width="1.4"/></svg>
<svg class="r" style="left:963px;top:429px" width="12" height="13" viewBox="0 0 12 13"><path d="M0 0.5H11L7 5.5V12.5L5 11V5.5Z" fill="#2e5052"/></svg>
<svg class="r" style="left:989px;top:428px" width="6" height="16" viewBox="0 0 6 16"><circle cx="2.8" cy="2.7" r="1.9" fill="none" stroke="#555" stroke-width="1"/><circle cx="2.8" cy="7.7" r="1.9" fill="none" stroke="#555" stroke-width="1"/><circle cx="2.8" cy="12.7" r="1.9" fill="none" stroke="#555" stroke-width="1"/></svg>
<div class="t " style="left:156.3px;top:448.19px;font-size:11px;letter-spacing:-0.116px;">Ereignisse zu Person: 1’021’001</div>
<div class="r" style="left:157px;top:460px;width:844px;height:271px;background:#c8c8c8;"></div>
<div class="r" style="left:157px;top:460px;width:844px;height:24px;background:#fff;"></div>
<div class="r" style="left:157px;top:484px;width:843px;height:16px;background:#ababab;"></div>
<div class="r" style="left:157px;top:501px;width:843px;height:16px;background:#fdf7d0;"></div>
<div class="r" style="left:157px;top:518px;width:843px;height:16px;background:#98f898;"></div>
<div class="r" style="left:157px;top:535px;width:843px;height:16px;background:#c8c8c8;"></div>
<div class="r" style="left:157px;top:552px;width:843px;height:16px;background:#c8c8c8;"></div>
<div class="r" style="left:157px;top:569px;width:843px;height:16px;background:#d86cd8;"></div>
<div class="r" style="left:157px;top:500px;width:844px;height:1px;background:#e4e4e4;"></div>
<div class="r" style="left:157px;top:517px;width:844px;height:1px;background:#e4e4e4;"></div>
<div class="r" style="left:157px;top:534px;width:844px;height:1px;background:#e4e4e4;"></div>
<div class="r" style="left:157px;top:551px;width:844px;height:1px;background:#e4e4e4;"></div>
<div class="r" style="left:157px;top:568px;width:844px;height:1px;background:#e4e4e4;"></div>
<div class="r" style="left:157px;top:585px;width:844px;height:1px;background:#e4e4e4;"></div>
<div class="r" style="left:157px;top:602px;width:844px;height:1px;background:#e4e4e4;"></div>
<div class="r" style="left:157px;top:619px;width:844px;height:1px;background:#e4e4e4;"></div>
<div class="r" style="left:157px;top:636px;width:844px;height:1px;background:#e4e4e4;"></div>
<div class="r" style="left:157px;top:653px;width:844px;height:1px;background:#e4e4e4;"></div>
<div class="r" style="left:157px;top:670px;width:844px;height:1px;background:#e4e4e4;"></div>
<div class="r" style="left:157px;top:687px;width:844px;height:1px;background:#e4e4e4;"></div>
<div class="r" style="left:157px;top:704px;width:844px;height:1px;background:#e4e4e4;"></div>
<div class="r" style="left:157px;top:721px;width:844px;height:1px;background:#e4e4e4;"></div>
<div class="r" style="left:244px;top:460px;width:1px;height:271px;background:#e4e4e4;"></div>
<div class="r" style="left:331px;top:460px;width:1px;height:271px;background:#e4e4e4;"></div>
<div class="r" style="left:430px;top:460px;width:1px;height:271px;background:#e4e4e4;"></div>
<div class="r" style="left:619px;top:460px;width:1px;height:271px;background:#e4e4e4;"></div>
<div class="r" style="left:701px;top:460px;width:1px;height:271px;background:#e4e4e4;"></div>
<div class="r" style="left:812px;top:460px;width:1px;height:271px;background:#e4e4e4;"></div>
<div class="r" style="left:864px;top:460px;width:1px;height:271px;background:#e4e4e4;"></div>
<div class="r" style="left:975px;top:460px;width:1px;height:271px;background:#e4e4e4;"></div>
<div class="r" style="left:1000px;top:460px;width:1px;height:271px;background:#e4e4e4;"></div>
<div class="r" style="left:1001px;top:484px;width:2px;height:247px;background:#d0d0d0;"></div>
<div class="r" style="left:1001px;top:484px;width:2px;height:16px;background:#ababab;"></div>
<div class="r" style="left:157px;top:731px;width:846px;height:2px;background:#fff;"></div>
<div class="t " style="left:162.6px;top:467.29px;font-size:11px;letter-spacing:-0.377px;">Datum</div>
<div class="t " style="left:250.5px;top:467.29px;font-size:11px;letter-spacing:0.124px;">Bezug</div>
<div class="t " style="left:337.5px;top:467.29px;font-size:11px;">Status</div>
<div class="t " style="left:436.3px;top:467.29px;font-size:11px;">Ereignis</div>
<div class="t" style="right:311.20000000000005px;top:467.29px;font-size:11px;">Response</div>
<div class="t " style="left:707.5px;top:467.29px;font-size:11px;">Person</div>
<div class="t " style="left:818.3px;top:467.29px;font-size:11px;">Kanal</div>
<div class="t " style="left:870.3px;top:467.29px;font-size:11px;">Adresse</div>
<div class="t " style="left:981.5px;top:467.29px;font-size:11px;">A</div>
<div class="t " style="left:177.3px;top:487.19px;font-size:11px;letter-spacing:-0.018px;">30.01.2023</div>
<div class="t " style="left:435.8px;top:487.19px;font-size:11px;">Palestina:gesu</div>
<div class="t" style="right:308.20000000000005px;top:487.19px;font-size:11px;">100.00</div>
<div class="t " style="left:817.8px;top:487.19px;font-size:11px;">Post</div>
<div class="t " style="left:177.3px;top:504.19px;font-size:11px;letter-spacing:-0.018px;">30.01.2023</div>
<div class="t " style="left:435.8px;top:504.19px;font-size:11px;">Demo II:brief</div>
<div class="t " style="left:817.8px;top:504.19px;font-size:11px;">Post</div>
<div class="t " style="left:177.3px;top:521.19px;font-size:11px;letter-spacing:-0.018px;">30.01.2023</div>
<div class="t " style="left:249.8px;top:521.19px;font-size:11px;letter-spacing:0.044px;">Beschenkter</div>
<div class="t " style="left:336.8px;top:521.19px;font-size:11px;letter-spacing:0.065px;">Response</div>
<div class="t " style="left:435.8px;top:521.19px;font-size:11px;letter-spacing:-0.140px;">2021.Zusagen.MIT: Mitgliedschaft E...</div>
<div class="t" style="right:308.20000000000005px;top:521.19px;font-size:11px;">50.00</div>
<div class="t " style="left:706.8px;top:521.19px;font-size:11px;">Emmi Keller</div>
<div class="t " style="left:869.8px;top:521.19px;font-size:11px;">Grüeblistrasse 2 9...</div>
<div class="t " style="left:177.3px;top:538.19px;font-size:11px;letter-spacing:-0.018px;">30.01.2023</div>
<div class="t " style="left:249.8px;top:538.19px;font-size:11px;letter-spacing:0.001px;">haushalt</div>
<div class="t " style="left:336.8px;top:538.19px;font-size:11px;letter-spacing:-0.113px;">initial</div>
<div class="t " style="left:435.8px;top:538.19px;font-size:11px;letter-spacing:-0.031px;">2023.Freie Spenden: --</div>
<div class="t " style="left:706.8px;top:538.19px;font-size:11px;">Erika Liebi</div>
<div class="t " style="left:817.8px;top:538.19px;font-size:11px;">Post</div>
<div class="t " style="left:869.8px;top:538.19px;font-size:11px;">Rosenbühlstrasse ...</div>
<div class="t " style="left:177.3px;top:555.19px;font-size:11px;letter-spacing:-0.018px;">01.09.2021</div>
<div class="t " style="left:336.8px;top:555.19px;font-size:11px;letter-spacing:-0.113px;">initial</div>
<div class="t " style="left:435.8px;top:555.19px;font-size:11px;letter-spacing:-0.185px;">2021.Mailings.Mailing August: Inakti...</div>
<div class="t " style="left:817.8px;top:555.19px;font-size:11px;">Post</div>
<div class="t " style="left:869.8px;top:555.19px;font-size:11px;">Rosenbühlstrasse ...</div>
<div class="t " style="left:177.3px;top:572.19px;font-size:11px;letter-spacing:-0.018px;">03.02.2020</div>
<div class="t " style="left:336.8px;top:572.19px;font-size:11px;">Event</div>
<div class="t " style="left:435.8px;top:572.19px;font-size:11px;letter-spacing:-0.100px;">Bestätigung: 2020 Event 2020</div>
<div class="t " style="left:817.8px;top:572.19px;font-size:11px;">Post</div>
<div class="t " style="left:869.8px;top:572.19px;font-size:11px;">Rosenbühlstrasse ...</div>
</body></html>
